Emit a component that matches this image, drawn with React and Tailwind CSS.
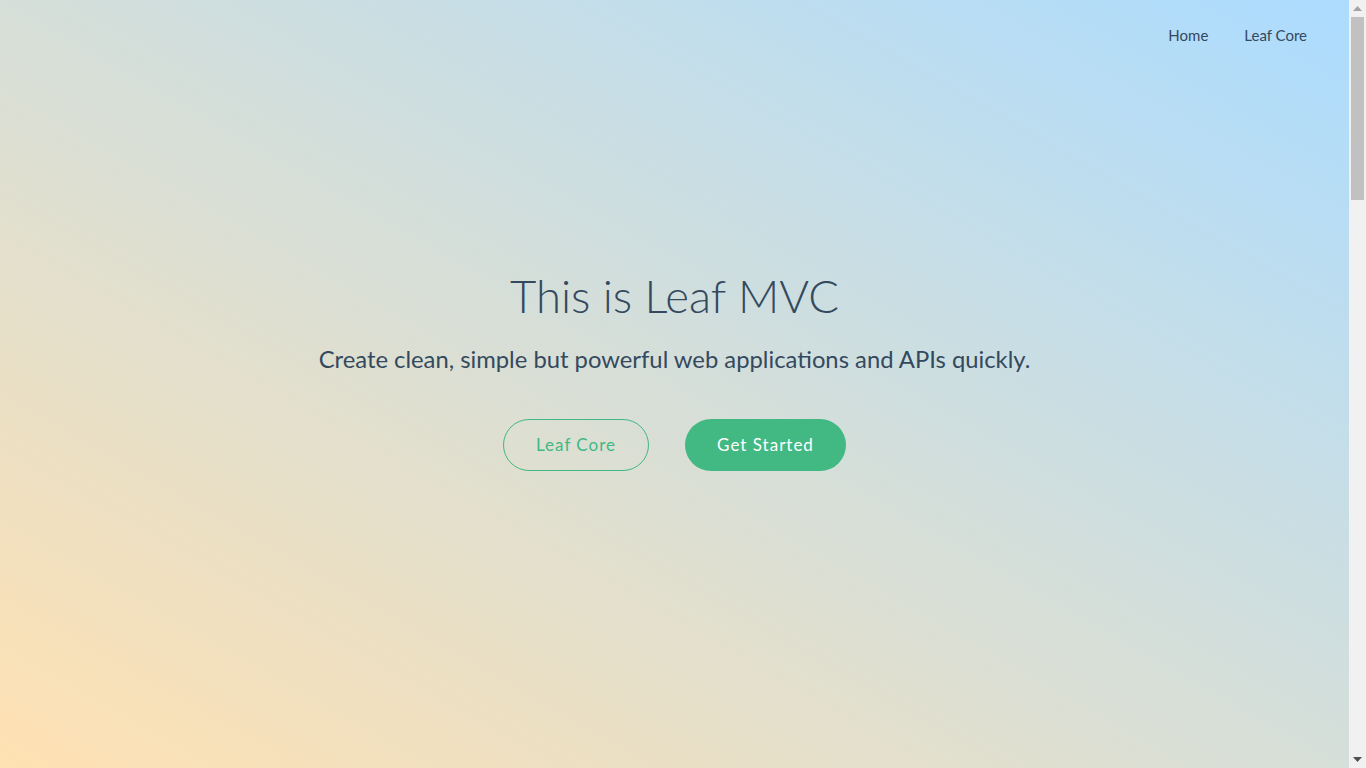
import React from "react";

const Scrollbar = () => {
  return (
    <div className="flex flex-col items-center w-[17px] h-screen bg-[#f1f1f1] shrink-0">
      <div className="flex items-center justify-center h-[17px]">
        <svg width="9" height="5" viewBox="0 0 9 5"><path d="M0 5 L4.5 0 L9 5 Z" fill="#a3a3a3" /></svg>
      </div>
      <div className="w-[13px] h-[183px] bg-[#c1c1c1]"></div>
      <div className="flex-1"></div>
      <div className="flex items-center justify-center h-[17px]">
        <svg width="9" height="5" viewBox="0 0 9 5"><path d="M0 0 L4.5 5 L9 0 Z" fill="#505050" /></svg>
      </div>
    </div>
  );
};

const App = () => {
  return (
    <div className="flex h-screen overflow-hidden font-['Lato','Noto_Sans',sans-serif] text-[#34495e]">
      <div className="flex flex-col flex-1 h-screen bg-[linear-gradient(to_top_right,#ffe1b2,#acdcff)]">
        <nav className="flex justify-end gap-9 h-[49px] pt-[24px] pr-[42px] text-[15px] leading-[22px]">
          <a href="#">Home</a>
          <a href="#">Leaf Core</a>
        </nav>
        <div className="flex flex-col items-center flex-1 pt-[224px]">
          <h1 className="text-[45.5px] font-light leading-none">This is Leaf MVC</h1>
          <p className="mt-[22px] text-[23.8px] leading-[36px]">Create clean, simple but powerful web applications and APIs quickly.</p>
          <div className="flex gap-9 mt-[42px]">
            <a href="#" className="flex items-center justify-center w-[146px] h-[52px] rounded-full border border-[#42b883] text-[#42b883] tracking-[1px] text-[17px]">
              Leaf Core
            </a>
            <a href="#" className="flex items-center justify-center w-[161px] h-[52px] rounded-full bg-[#42b883] text-white tracking-[1px] text-[17px]">
              Get Started
            </a>
          </div>
        </div>
      </div>
      <Scrollbar />
    </div>
  );
};

export default App;
